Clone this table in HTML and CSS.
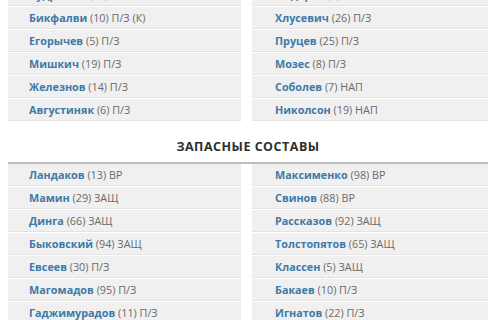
FILE: index.html
```html
<!DOCTYPE html>
<html lang="ru">
<head>
<meta charset="utf-8">
<link rel="stylesheet" href="styles.css">
</head>
<body>
<div class="page">
  <div class="cols">
    <ul class="list">
      <li><b>Кудряшов</b> (77) П/З</li>
      <li><b>Бикфалви</b> (10) П/З (К)</li>
      <li><b>Егорычев</b> (5) П/З</li>
      <li><b>Мишкич</b> (19) П/З</li>
      <li><b>Железнов</b> (14) П/З</li>
      <li><b>Августиняк</b> (6) П/З</li>
    </ul>
    <ul class="list">
      <li><b>Фёдоров</b> (9) П/З</li>
      <li><b>Хлусевич</b> (26) П/З</li>
      <li><b>Пруцев</b> (25) П/З</li>
      <li><b>Мозес</b> (8) П/З</li>
      <li><b>Соболев</b> (7) НАП</li>
      <li><b>Николсон</b> (19) НАП</li>
    </ul>
  </div>
  <h2 class="heading">Запасные составы</h2>
  <div class="cols">
    <ul class="list">
      <li><b>Ландаков</b> (13) ВР</li>
      <li><b>Мамин</b> (29) ЗАЩ</li>
      <li><b>Динга</b> (66) ЗАЩ</li>
      <li><b>Быковский</b> (94) ЗАЩ</li>
      <li><b>Евсеев</b> (30) П/З</li>
      <li><b>Магомадов</b> (95) П/З</li>
      <li><b>Гаджимурадов</b> (11) П/З</li>
    </ul>
    <ul class="list">
      <li><b>Максименко</b> (98) ВР</li>
      <li><b>Свинов</b> (88) ВР</li>
      <li><b>Рассказов</b> (92) ЗАЩ</li>
      <li><b>Толстопятов</b> (65) ЗАЩ</li>
      <li><b>Классен</b> (5) ЗАЩ</li>
      <li><b>Бакаев</b> (10) П/З</li>
      <li><b>Игнатов</b> (22) П/З</li>
    </ul>
  </div>
</div>
</body>
</html>
```
FILE: styles.css
```css
html, body {
  margin: 0;
  padding: 0;
  background: #fff;
  overflow: hidden;
}
.page {
  margin: -16px 12px 0 8px;
  font-family: "Open Sans", "DejaVu Sans", sans-serif;
}
.cols {
  display: grid;
  grid-template-columns: 233px 236px;
  column-gap: 11px;
}
.list {
  list-style: none;
  margin: 0;
  padding: 0;
}
.list li {
  height: 21px;
  line-height: 21px;
  padding-left: 21px;
  background: #f1f0f0;
  border-bottom: 1px solid #e3e3e3;
  margin-bottom: 1px;
  font-size: 10.8px;
  color: #6a6a6a;
  white-space: nowrap;
}
.list li b {
  color: #3d7aa7;
  font-weight: 700;
}
.cols .list + .list li {
  padding-left: 23px;
}
.heading {
  margin: 0;
  padding: 17px 0 7px;
  line-height: 16px;
  text-align: center;
  text-transform: uppercase;
  font-size: 12.5px;
  font-weight: 700;
  color: #2e2e2e;
  letter-spacing: 0.5px;
  border-bottom: 2px solid #bdbdbd;
}
```
